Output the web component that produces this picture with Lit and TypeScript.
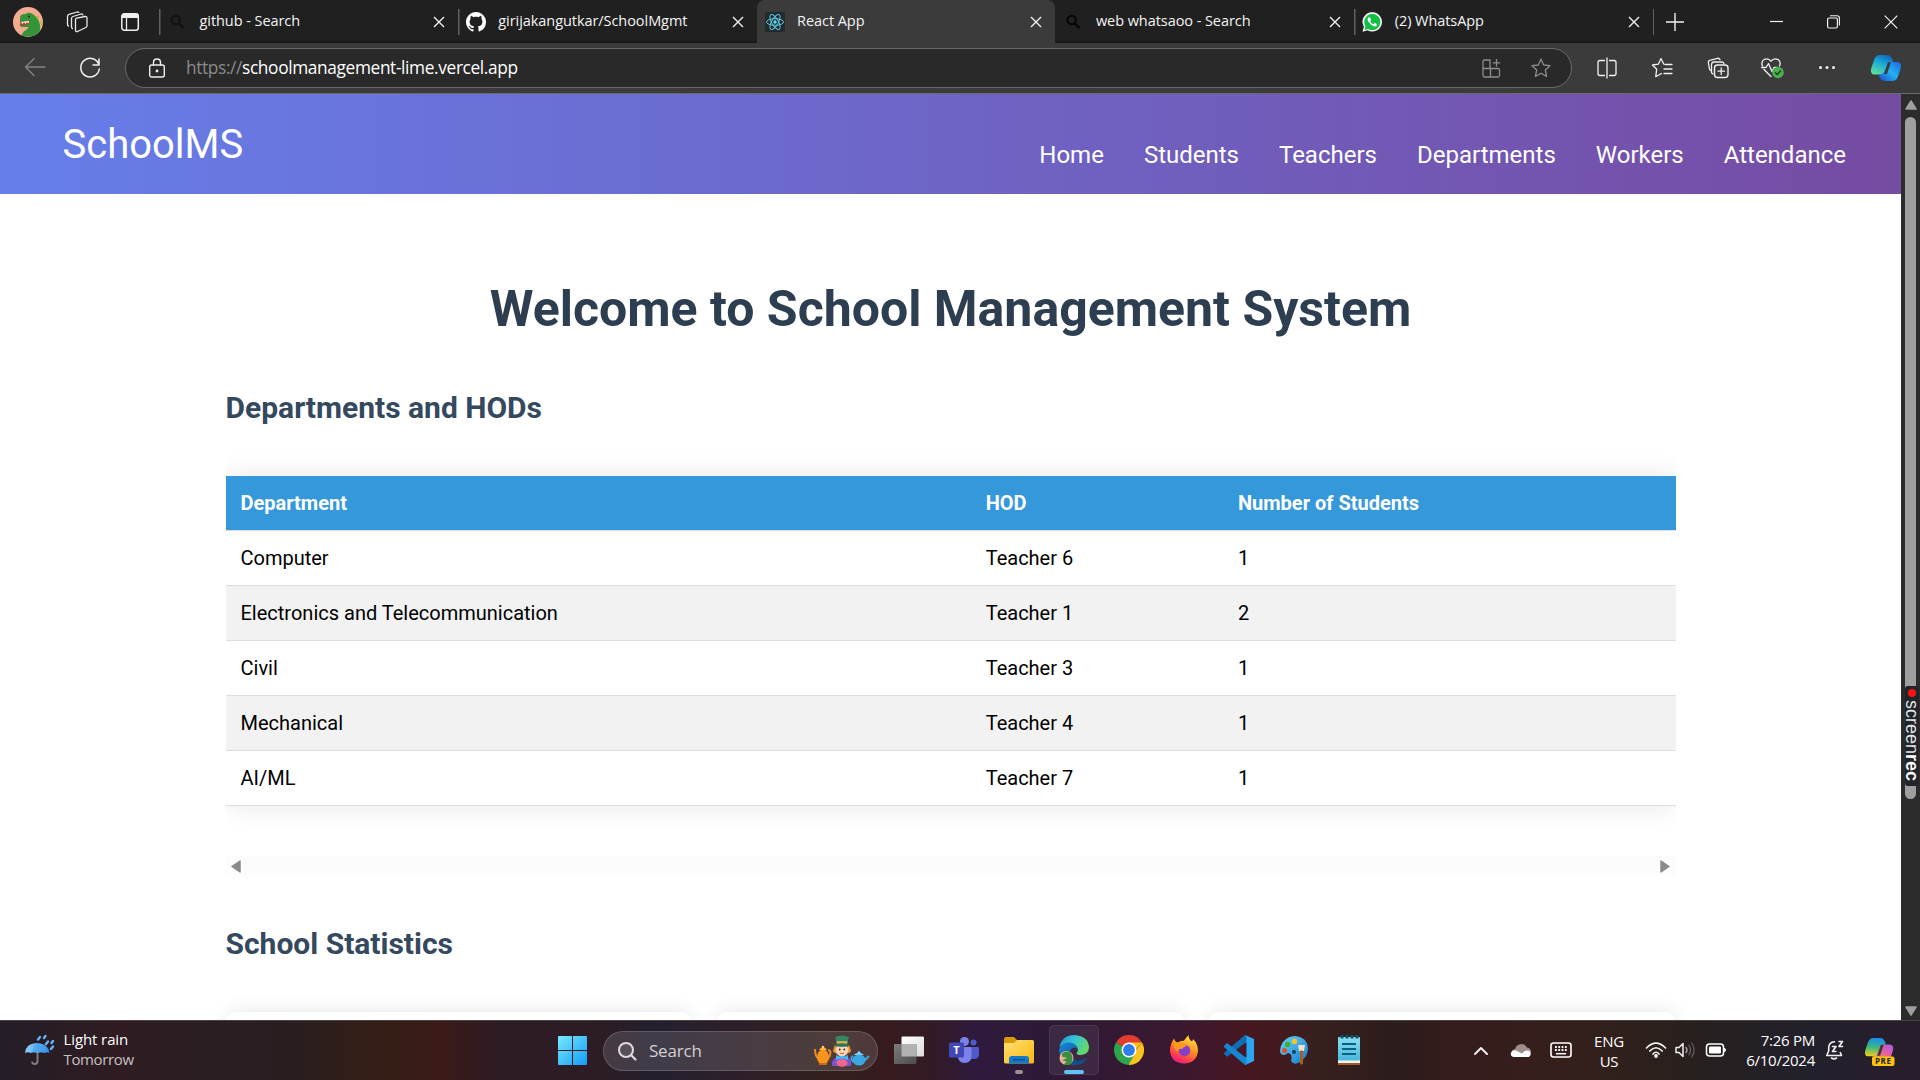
import { LitElement, html, css, svg, TemplateResult, SVGTemplateResult } from "lit";
import { customElement } from "lit/decorators.js";

const icon = (w: number, h: number, body: SVGTemplateResult, cls = "") =>
  html`<svg class=${"ic " + cls} width=${w} height=${h} viewBox=${`0 0 ${w} ${h}`}>${body}</svg>`;

/* ---------- tab strip ---------- */
const avatar = icon(30, 30, svg`
  <defs><clipPath id="av"><circle cx="15" cy="15" r="15"/></clipPath></defs>
  <g clip-path="url(#av)"><rect width="30" height="30" fill="#f4ab90"/>
  <path d="M7 11 Q7 7 12 7 Q17 4 21 8 Q26 12 27 18 Q28 25 24 29 L8 30 Q9 25 13 23 L16 20 L9 20 Q6 19 7 17 L16 16 L7 15 Z" fill="#35943a"/>
  <path d="M7 15 L17 14 L16 17 L8 19 Z" fill="#c33a2b"/>
  <path d="M8 15 L9.5 17 L11 15 L12.500 17 L14 15 L15.500 16.500 L16 14Z" fill="#fff"/>
  <circle cx="16" cy="9.500" r="1" fill="#17351a"/>
  <path d="M23 9 l3 0 -1 3z M26 15 l3 -1 -1 4z M27 21 l2.500 0 -2 3z" fill="#a6c52e"/></g>`);
const workspaces = icon(22, 22, svg`<g fill="none" stroke="#e8e8e8" stroke-width="1.300" stroke-linejoin="round">
  <path d="M9.500 8.500 Q9.500 7.500 10.700 7.200 L19 5.500 Q21 5.300 21 7 V14.500 Q21 16 19.800 16.500 L11.500 20.500 Q9.500 21 9.500 19.300 Z"/>
  <path d="M7 17.500 Q5.500 17.500 5.500 16 V7.500 Q5.500 6 7 5.500 L15 3 Q16.800 2.600 17 4.500"/>
  <path d="M3 15 Q1.500 15 1.500 13.300 V5.500 Q1.500 3.800 3 3.300 L11 1 Q12.800 .8 13 2"/></g>`);
const tabActions = icon(20, 20, svg`<rect x="1.800" y="1.800" width="16.500" height="16.500" rx="2.500" fill="none" stroke="#f0f0f0" stroke-width="1.500"/>
  <path d="M1.500 6 V4 Q1.500 1.500 4 1.500 H16 Q18.500 1.500 18.500 4 V6Z" fill="#f0f0f0"/><path d="M6.500 6 V18" stroke="#f0f0f0" stroke-width="1.300"/>`);
const searchFav = (c: string) => icon(20, 20, svg`<circle cx="8.700" cy="8" r="4.200" fill="none" stroke=${c} stroke-width="2"/><path d="M11.800 11.300 L16.500 16" stroke=${c} stroke-width="2.400"/>`);
const github = svg`<path transform="scale(1.25)" fill="#fff" d="M8 0C3.580 0 0 3.580 0 8c0 3.540 2.290 6.530 5.470 7.590.4.070.55-.17.55-.38 0-.19-.01-.82-.01-1.490-2.010.37-2.530-.49-2.690-.94-.09-.23-.48-.94-.82-1.130-.28-.15-.68-.52-.01-.53.63-.01 1.080.58 1.230.82.72 1.210 1.870.87 2.330.66.07-.52.28-.87.51-1.070-1.780-.2-3.640-.89-3.640-3.950 0-.87.31-1.590.82-2.150-.08-.2-.36-1.020.08-2.120 0 0 .67-.21 2.200.82.64-.18 1.320-.27 2-.27s1.360.09 2 .27c1.530-1.040 2.200-.82 2.200-.82.44 1.100.16 1.920.08 2.120.51.56.82 1.270.82 2.150 0 3.070-1.870 3.750-3.650 3.950.29.25.54.73.54 1.480 0 1.070-.01 1.930-.01 2.200 0 .21.15.46.55.38A8.010 8.010 0 0 0 16 8c0-4.420-3.580-8-8-8z"/>`;
const react = svg`<rect width="20" height="20" rx="2" fill="#222a2e"/><g fill="none" stroke="#5bc8e2" stroke-width="1">
  <ellipse cx="10" cy="10" rx="8.500" ry="3.300"/><ellipse cx="10" cy="10" rx="8.500" ry="3.300" transform="rotate(60 10 10)"/><ellipse cx="10" cy="10" rx="8.500" ry="3.300" transform="rotate(120 10 10)"/></g><circle cx="10" cy="10" r="1.700" fill="#61dafb"/>`;
const whatsapp = svg`<path d="M.5 19.700 L1.900 14.800 A9.700 9.700 0 1 1 5.500 18.300 Z" fill="#fff"/><path d="M2.400 17.900 L3.400 14.300 A8.100 8.100 0 1 1 6 16.900 Z" fill="#12c143"/>
  <path d="M7.300 5.300 Q6.600 5.200 6 6 Q4.900 7.400 6.300 9.600 Q8.900 13.700 12.200 14.500 Q14.400 14.800 14.900 13.200 Q15.200 12.200 14.800 12 L12.900 11.100 Q12.500 11 12.200 11.400 L11.500 12.200 Q9.300 11.500 8.200 9.200 L8.900 8.200 Q9 7.900 8.900 7.600 L8.100 5.700 Q7.900 5.300 7.300 5.300Z" fill="#fff"/>`;
const closeIcon = icon(12, 12, svg`<path d="M1 1 L11 11 M11 1 L1 11" stroke="#f2f2f2" stroke-width="1.400"/>`);
const line = (d: string, w = 1.3, c = "#f0f0f0") => svg`<path d=${d} fill="none" stroke=${c} stroke-width=${w} stroke-linecap="round" stroke-linejoin="round"/>`;

interface Tab { title: string; fav: TemplateResult; active?: boolean; }
const TABS: Tab[] = [
  { title: "github - Search", fav: searchFav("#111") },
  { title: "girijakangutkar/SchoolMgmt", fav: icon(20, 20, github) },
  { title: "React App", fav: icon(20, 20, react), active: true },
  { title: "web whatsaoo - Search", fav: searchFav("#050505") },
  { title: "(2) WhatsApp", fav: icon(20, 20, whatsapp) },
];

const STAR = "M10 1.200 L12.700 7 L19 7.700 L14.300 12 L15.600 18.500 L10 15.200 L4.400 18.500 L5.700 12 L1 7.700 L7.300 7 Z";
const toolIcons: TemplateResult[] = [
  icon(22, 22, svg`${line("M8.500 3.500 H4 Q2 3.500 2 5.500 V16.500 Q2 18.500 4 18.500 H8.500 M13.500 3.500 H18 Q20 3.500 20 5.500 V16.500 Q20 18.500 18 18.500 H13.500 M11 1 V21")}`),
  icon(22, 22, svg`${line("M14.200 7.500 L12.700 7 L10 1.500 L7.300 7.200 L1.500 8 L5.700 12.300 L4.700 19.700 L10.500 16.500 M14.500 7.500 H21 M13 12 H21 M13 16.500 H21")}`),
  icon(22, 22, svg`${line("M4 13.500 Q2.800 13.300 2.500 12 L1.300 5.500 Q1 3.800 2.800 3.300 L10.500 1.300 Q12.300 1 13 2.800")}${line("M6 17 Q4.500 16.500 4.500 15 V7.500 Q4.500 5.500 6.500 5 H14.500 Q16.500 5 17 6.500")}<rect x="7.500" y="8" width="13.500" height="12.500" rx="3" fill="#3b3b3b" stroke="#f0f0f0" stroke-width="1.400"/>${line("M14.200 11 V17.500 M11 14.200 H17.500")}`),
  icon(24, 22, svg`${line("M2.500 9 Q.5 4.500 4.500 2.300 Q8.500 .8 11 4.200 Q13.500 .8 17.500 2.300 Q21.500 4.500 19.500 9 M4 12.500 L11 19.500")}${line("M1.500 10.500 H6 L8.500 6.500 L12 14.500 L14 10.500 H17")}<circle cx="18" cy="15.500" r="5.800" fill="#4caf50"/>${line("M15.600 15.700 L17.300 17.400 L20.500 14", 1.4, "#1d3b1e")}`),
  icon(22, 22, svg`<g fill="#f0f0f0"><circle cx="4.500" cy="10.500" r="1.500"/><circle cx="11" cy="10.500" r="1.500"/><circle cx="17.500" cy="10.500" r="1.500"/></g>`),
];

const copilotShape = (a: string, b: string) => svg`
  <path d="M9 0 H16 Q20 0 21.500 4.500 L22 7 Q18 7 16.500 12 L14.500 18 Q13.500 19.500 11 19.500 H4 Q-1.500 19.500 .5 12.500 L3 5 Q4.700 0 9 0Z" fill=${`url(#${a})`}/>
  <path d="M21.500 7 H26 Q31.500 7 29.500 14 L27 21.500 Q25.300 26 21 26 H14 Q10 26 8.500 22 L8 19.500 Q12 20 13.700 14.500 L15.700 9 Q16.500 7 19 7Z" fill=${`url(#${b})`}/>
  <path d="M16.800 7.200 L13 19 H16 L20 7.200Z" fill="#3a3a3e"/>`;
const copilot = icon(30, 26, svg`<defs>
  <linearGradient id="c1" x1=".7" y1="0" x2=".2" y2="1"><stop offset="0" stop-color="#1268b8"/><stop offset=".4" stop-color="#16a6dc"/><stop offset="1" stop-color="#5fe29a"/></linearGradient>
  <linearGradient id="c2" x1="0" y1="1" x2="1" y2="0"><stop offset="0" stop-color="#1b49cf"/><stop offset=".5" stop-color="#22b3f3"/><stop offset="1" stop-color="#1e62e0"/></linearGradient></defs>${copilotShape("c1", "c2")}`);

/* ---------- taskbar ---------- */
const umbrella = icon(32, 32, svg`<defs><linearGradient id="um" x1="0" x2="1"><stop offset="0" stop-color="#8fd0ff"/><stop offset="1" stop-color="#2f8be0"/></linearGradient></defs>
  <path d="M13.500 18 V27 Q13.500 30 10.700 30 Q8 30 8.200 27.500" fill="none" stroke="#85807f" stroke-width="1.900"/>
  <path d="M1 19 Q2 9 13 9 Q24 9 25.500 19 Q23 17.500 20.500 19 Q17 17.500 13.500 19 Q10 17.500 6.500 19 Q4 17.500 1 19Z" fill="url(#um)"/><path d="M8 18.500 Q9 12 13 9 Q17.500 12 18.500 18.500 Q16 17.800 13.500 19 Q10 17.800 8 18.500" fill="#3d9cee" opacity=".45"/>
  <path d="M14 5.500 L16 3 M20 4 L21.500 2 M22 10 L24 7.500 M27.500 9 L29 7 M27 15 L29 12.500" stroke="#64b5f6" stroke-width="2.400" stroke-linecap="round"/>`);
const winLogo = icon(29, 29, svg`<defs><linearGradient id="wn" gradientUnits="userSpaceOnUse" x1="0" y1="0" x2="29" y2="29"><stop offset="0" stop-color="#77eaff"/><stop offset="1" stop-color="#139bf7"/></linearGradient></defs>
  <path d="M0 1 Q0 0 1 0 H14 V14 H0Z M15 0 H28 Q29 0 29 1 V14 H15Z M0 15 H14 V29 H1 Q0 29 0 28Z M15 15 H29 V28 Q29 29 28 29 H15Z" fill="url(#wn)"/>`);
const hatter = icon(56, 32, svg`
  <path d="M1 14 Q1 22 5 24 M14 15 Q19 16 14 24" stroke="#f08a1c" stroke-width="2" fill="none"/><ellipse cx="9" cy="22" rx="6" ry="7.500" fill="#f7941d"/><path d="M5 15 Q9 9 13 15Z" fill="#ffb43b"/><rect x="5" y="28" width="8" height="2" fill="#c96a12"/><circle cx="9" cy="12" r="1.200" fill="#ffd26a"/>
  <path d="M18 31 Q17 22 28 21 Q39 22 37 31Z" fill="#7a55d2"/><path d="M25 21 L28 25 L31 21Z" fill="#3fb4f0"/>
  <path d="M21.500 11 L20 16 L23 18 M34.500 11 L36 16 L33 18" fill="#f1a63b" stroke="#e8962f" stroke-width="2"/>
  <circle cx="28" cy="15" r="6.300" fill="#f8d5b5"/><circle cx="25.700" cy="14.500" r=".9" fill="#3c2b1f"/><circle cx="30.300" cy="14.500" r=".9" fill="#3c2b1f"/><path d="M26 18 Q28 19.500 30 18" stroke="#c25b4c" fill="none"/>
  <path d="M21 2 Q28 -1 35 2 L33 9 H23Z" fill="#348561"/><path d="M22.500 6.300 H33.500 L33 9 H23Z" fill="#e0b64d"/><ellipse cx="28" cy="10" rx="7.700" ry="1.800" fill="#2c7354"/>
  <ellipse cx="28" cy="28" rx="5.500" ry="3.800" fill="#f0668c"/><path d="M22 20 L28 23 L22 25Z M34 20 L28 23 L34 25Z" fill="#45b9f5"/>
  <ellipse cx="45" cy="25" rx="6.500" ry="5.500" fill="#3aa6e2"/><path d="M39.500 20 Q45 15 50 20Z" fill="#74cdf4"/><path d="M50 26 L55 21 M39 21 Q35.500 23 39.500 27" stroke="#3aa6e2" stroke-width="2" fill="none"/><circle cx="45" cy="17.500" r="1.200" fill="#8fdcff"/>`);
const taskView = icon(30, 30, svg`<defs><linearGradient id="tv" x1="0" y1="0" x2="1" y2="1"><stop offset="0" stop-color="#fff"/><stop offset="1" stop-color="#dcdcdc"/></linearGradient><linearGradient id="tw" x1="0" y1="0" x2="1" y2="1"><stop offset="0" stop-color="#7d7d7d"/><stop offset="1" stop-color="#4b4b4b"/></linearGradient></defs>
  <rect x="7.500" y="1.500" width="22.500" height="20" rx="1" fill="url(#tv)"/><rect x="0" y="9" width="22.500" height="20" rx="1" fill="url(#tw)"/><rect x="7.500" y="9" width="15" height="12.500" fill="#b2b2b2"/>`);
const teams = icon(30, 30, svg`<circle cx="24.500" cy="7.500" r="3" fill="#5059c9"/><path d="M19 12 H29 Q30 12 30 13.500 V19 Q30 24 25 24 H20Z" fill="#5059c9"/><circle cx="15.500" cy="6.500" r="4.500" fill="#7b83eb"/>
  <path d="M9 12 H21 Q22.500 12 22.500 13.500 V21 Q22.500 28 15.500 28 Q9 28 9 21Z" fill="#7b83eb"/><rect x="0" y="7.500" width="15" height="15" rx="1.500" fill="#4048b8"/><text x="7.500" y="19" class="tm" text-anchor="middle">T</text>`);
const explorer = icon(30, 30, svg`<defs><linearGradient id="fo" x1="0" y1="0" x2="1" y2="1"><stop offset="0" stop-color="#ffe070"/><stop offset="1" stop-color="#fbb712"/></linearGradient></defs>
  <path d="M0 4 Q0 2 2 2 H10 L13 5 H20 V12 H0Z" fill="#d99a0b"/><path d="M0 8 H10 L13 5 H28.500 Q30 5 30 6.500 V27 Q30 28.500 28.500 28.500 H1.500 Q0 28.500 0 27Z" fill="url(#fo)"/>
  <path d="M5 28.500 V24 Q5 21 8 21 H22 Q25 21 25 24 V28.500Z" fill="#1379c9"/><path d="M9 24.700 H21" stroke="#0a4a86" stroke-width="1.300"/>`);
const edge = icon(30, 30, svg`<defs><linearGradient id="e1" x1="0" y1="0" x2="1" y2=".4"><stop offset="0" stop-color="#1f8ed0"/><stop offset=".5" stop-color="#35c3d8"/><stop offset="1" stop-color="#62d96b"/></linearGradient>
  <linearGradient id="e2" x1="0" y1="0" x2="1" y2="1"><stop offset="0" stop-color="#1a86d8"/><stop offset="1" stop-color="#0c4b93"/></linearGradient></defs>
  <path d="M.4 12 Q3 0 15.500 0 Q29.500 1 30 12.500 Q29.500 19.500 22 20 Q17.500 20 17.500 18 Q20 15.500 18 12 Q14 7 7 9 Q3 10 .4 12Z" fill="url(#e1)"/>
  <path d="M.2 14 Q3 7 11 7.500 Q18 8.500 18.700 14 Q14 11 11.500 15 Q9 20 14 25 Q20 30 28 23 Q23 30 15 30 Q0 28 .2 14Z" fill="url(#e2)"/>
  <path d="M11.500 15 Q9 23 18 25.500 Q23 26.500 28 22.500 Q26 29 17 30 Q7 28 8 19 Q9 16 11.500 15" fill="#114f93"/>
  <circle cx="7.500" cy="23" r="7" fill="#efb294"/><path d="M3 18.500 Q9 14.500 12.500 19 Q15 25 11 30 H4.500 L7.500 26.500 L3 25.500 L8 23 L3 21.500Z" fill="#3b8e3d"/>`);
const chrome = icon(30, 30, svg`<path d="M15 15 L2 7.500 A15 15 0 0 1 28 7.500Z" fill="#e33b2e"/><path d="M15 15 H22 L28 7.500 A15 15 0 0 1 15 30Z" fill="#fcc31e"/><path d="M15 15 L20.500 19.500 L14.500 30 A15 15 0 0 1 2 7.500Z" fill="#2da44e"/><path d="M15 7.500 H28 L21.500 15Z" fill="#fcc31e"/><circle cx="15" cy="15" r="7.500" fill="#fff"/><circle cx="15" cy="15" r="5.900" fill="#2f7ded"/>`);
const firefox = icon(30, 30, svg`<defs><linearGradient id="ff" x1=".8" y1="0" x2=".3" y2="1"><stop offset="0" stop-color="#ffec4a"/><stop offset=".45" stop-color="#ff9420"/><stop offset=".8" stop-color="#ff3a50"/><stop offset="1" stop-color="#e01c8a"/></linearGradient></defs>
  <path d="M5 3.500 Q6 7 9 7.500 Q12 5 14.500 6 Q17 3 19.500 0 Q19.500 4 23 6.500 Q24 5 24 4 Q29 9 29 15.500 Q28 28 15 28.500 Q2 28 1 16 Q1 9 5 3.500Z" fill="url(#ff)"/>
  <circle cx="15.500" cy="15.500" r="5.800" fill="#8440c9"/><path d="M5 9 Q10 6 15 9.500 L18 11 Q14 12 13 14 Q9 13 9.500 17 Q4 14 5 9Z" fill="#ff9a1f"/>`);
const vscode = icon(30, 30, svg`<path d="M21 0 L30 4 V26 L21 30 Z" fill="#2aa7f2"/><path d="M0 19 L3 21.800 L22.500 7 V0 H21 L.5 17.500Z" fill="#0f6fb5"/><path d="M0 11 L3 8 L22.500 23 V30 H21 L.5 12.500Z" fill="#1787d3"/><path d="M22.500 7.300 L12.500 15 L22.500 22.700Z" fill="#431a28"/>`);
const paint = icon(30, 30, svg`<defs><linearGradient id="pa" x1="0" y1="0" x2="1" y2="1"><stop offset="0" stop-color="#66d4f2"/><stop offset="1" stop-color="#1779cf"/></linearGradient></defs>
  <path d="M16 1 Q28 2 29 13 Q29 22 21 27 Q15 31 12 26 Q14 19 9 18 Q4 22 1.500 18 Q0 13 4 7 Q9 1 16 1Z" fill="url(#pa)"/><circle cx="8.500" cy="9.500" r="2.700" fill="#3fae2a"/><circle cx="15.500" cy="6.500" r="2.700" fill="#f9c41d"/><circle cx="5.500" cy="15.500" r="2.500" fill="#d9502b"/><circle cx="15" cy="17" r="2" fill="#10406f"/>
  <path d="M19 10 H26 L25 16 H20Z" fill="#f6dfc6"/><rect x="21" y="15.500" width="3" height="14" rx="1" fill="#a4601c"/>`);
const notepad = icon(30, 30, svg`<defs><linearGradient id="np" x1="0" y1="0" x2="0" y2="1"><stop offset="0" stop-color="#8be0f2"/><stop offset="1" stop-color="#46b8dc"/></linearGradient></defs>
  <rect x="4" y="26" width="22" height="4" fill="#a35a22"/><rect x="4" y="23" width="22" height="5" fill="#f3f3f3"/><rect x="4" y="2" width="22" height="23.500" rx="1" fill="url(#np)"/><path d="M8 9 H22 M8 14 H22 M8 19 H22" stroke="#0b5f80" stroke-width="1.800"/><path d="M8 0 V3.500 M13 0 V3.500 M18 0 V3.500 M23 0 V3.500" stroke="#0d5470" stroke-width="3"/>`);
const copilotPre = icon(30, 30, svg`<defs><linearGradient id="p1" x1=".3" y1="0" x2=".2" y2="1"><stop offset="0" stop-color="#1a8df0"/><stop offset=".5" stop-color="#3cb97b"/><stop offset="1" stop-color="#f4cf1c"/></linearGradient>
  <linearGradient id="p2" x1="1" y1="0" x2=".3" y2="1"><stop offset="0" stop-color="#a35bf0"/><stop offset=".5" stop-color="#ec5f9c"/><stop offset="1" stop-color="#f99a3c"/></linearGradient></defs>
  <g transform="translate(0 2) scale(.94)">${copilotShape("p1", "p2")}</g><rect x="7" y="20.500" width="22.500" height="9.500" rx="2" fill="#ffc40c"/><text x="18.300" y="28" class="pre" text-anchor="middle">PRE</text>`);

const APPS: { ic: TemplateResult; dot?: boolean; active?: boolean }[] = [
  { ic: taskView }, { ic: teams }, { ic: explorer, dot: true }, { ic: edge, active: true },
  { ic: chrome }, { ic: firefox }, { ic: vscode }, { ic: paint }, { ic: notepad },
];

const ROWS: [string, string, number][] = [
  ["Computer", "Teacher 6", 1],
  ["Electronics and Telecommunication", "Teacher 1", 2],
  ["Civil", "Teacher 3", 1],
  ["Mechanical", "Teacher 4", 1],
  ["AI/ML", "Teacher 7", 1],
];

@customElement("app-root")
export class AppRoot extends LitElement {
  static styles = css`
    :host { display: block; width: 1920px; height: 1080px; overflow: hidden; background: #fff; }
    * { box-sizing: border-box; }
    .screen { display: flex; flex-direction: column; width: 1920px; height: 1080px; font-family: "Open Sans", "Noto Sans", sans-serif; }
    .ic { display: block; flex: none; }
    .grow { flex: 1; }

    .tabs { height: 43px; flex: none; display: flex; align-items: center; background: #202020; box-shadow: inset 0 -2px 2px -1px #151515; color: #f4f4f4; }
    .lead { width: 159px; display: flex; align-items: center; padding-left: 13px; gap: 23px; flex: none; }
    .lead .ic:last-child { margin-left: 9px; }
    .tab { width: 298.800px; height: 43px; flex: none; display: flex; align-items: center; padding: 1px 13px 0 7px; font-size: 14.500px; gap: 12.500px; border-left: 1px solid transparent;
      background: linear-gradient(#606060, #606060) left 9px / 1.500px 26px no-repeat; background-origin: border-box; white-space: nowrap; letter-spacing: -.06px; }
    .tab .t { flex: 1; height: 22px; line-height: 20px; }
    .tab.active { background: #3b3b3b; border-radius: 8px 8px 0 0; }
    .tab.after { background: none; }
    .endsep { width: 1.500px; height: 26px; background: #606060; margin-right: 12px; }
    .win { display: flex; align-items: center; gap: 44px; padding-right: 22px; }

    .toolbar { height: 51px; flex: none; background: #3b3b3b; border-bottom: 1px solid #6a6a6a; display: flex; align-items: center; padding: 0 19px 0 24px; }
    .reload { margin-left: 33px; }
    .omni { width: 1447px; height: 40px; margin: 0 24px 0 24px; border: 1px solid #6a6a6a; border-radius: 20px; background: #292929; display: flex; align-items: center; padding: 0 20px 0 22px; flex: none; }
    .url { margin-left: 20px; font-size: 17.300px; line-height: 24px; color: #fff; letter-spacing: -.36px; white-space: nowrap; }
    .url .dim { color: #8b8b8b; }
    .omni .star { margin-left: 30px; }
    .tools { display: flex; align-items: center; gap: 33.300px; flex: 1; }
    .tools .ic:nth-of-type(4) { margin: 0 -1.500px; }

    .view { flex: none; height: 926px; display: flex; background: #fff; }
    .page { width: 1901px; height: 926px; overflow: hidden; font-family: Roboto, sans-serif; display: flex; flex-direction: column; }
    .head { height: 100px; flex: none; display: flex; align-items: center; justify-content: space-between; padding: 0 55px 0 62.500px; color: #fff; background: linear-gradient(90deg, #667eea, #764ba2); }
    .brand { font-size: 40px; line-height: 48px; padding-top: 2px; }
    nav { display: flex; gap: 40px; font-size: 24px; line-height: 30px; padding-top: 21px; }
    main { width: 1450px; margin: 85px 0 0 225.500px; flex: none; }
    h1 { margin: 0; font-size: 50px; line-height: 60px; text-align: center; color: #2c3e50; font-weight: 700; }
    h2 { margin: 51px 0 0; font-size: 30px; line-height: 36px; color: #34495e; font-weight: 700; }
    .wrap { margin-top: 10px; padding: 40px 0 50px; overflow: hidden; }
    .grid { box-shadow: 0 0 25px rgba(0, 0, 0, .1); background: #fff; }
    .row { display: grid; grid-template-columns: 745.200px 252.300px 1fr; height: 55px; border-bottom: 1px solid #ddd; font-size: 20px; line-height: 54px; color: #000; }
    .row span { padding-left: 15px; }
    .row.even { background: #f2f2f2; }
    .row.th { background: #3498db; background-clip: padding-box; color: #fff; font-weight: 700; }
    .hbar { height: 19px; background: #fcfcfc; display: flex; align-items: center; justify-content: space-between; padding: 1px 5.500px 0; }
    .cards { display: grid; grid-template-columns: repeat(3, 1fr); gap: 25px; margin-top: 50px; }
    .card { height: 150px; border-radius: 10px; background: #fff; box-shadow: 0 0 20px rgba(0, 0, 0, .1); }
    .vbar { width: 19px; background: #2c2c2c; display: flex; flex-direction: column; padding: 6px 0 4px 4px; position: relative; }
    .thumb { width: 11px; height: 682px; margin-top: 7px; border-radius: 6px; background: #9f9f9f; }
    .rec { position: absolute; left: 4px; top: 592px; width: 14px; height: 100px; border-radius: 3px; background: #20252b; writing-mode: vertical-rl; display: flex; align-items: center; padding-top: 3px; font: 18px/14px "Liberation Sans", sans-serif; color: #e4e4e4; white-space: nowrap; }
    .rec i { width: 8px; height: 8px; border-radius: 50%; background: #f11; margin-bottom: 3px; flex: none; }
    .rec b { color: #fff; }

    .bar { height: 60px; flex: none; border-top: 1px solid #4a4444; display: flex; align-items: center; color: #fff;
      background: linear-gradient(90deg, #241e28 0, #2f1c22 110px, #2b1e22 200px, #281e20 290px, #351e16 380px, #3a1a17 440px, #2d1c26 500px, #2d1c24 590px, #24202e 655px, #2d1f2a 740px, #33201d 830px, #361a1f 890px, #331a24 930px, #2f1a3d 975px, #2d1935 1060px, #3b1830 1180px, #481720 1250px, #36201e 1320px, #2c1c1c 1400px, #361b1c 1450px, #34201a 1580px, #27201f 1700px, #22202b 1810px, #291d2c 1920px); }
    .weather { width: 533px; padding-left: 24px; display: flex; gap: 7.500px; align-items: center; font-size: 15px; line-height: 20px; padding-bottom: 3px; letter-spacing: -.35px; }
    .weather .main { letter-spacing: -.1px; }
    .weather .sub { color: #c6c1c2; }
    .weather .ic { margin-top: 2px; }
    .start { width: 70px; padding-left: 25px; }
    .search { width: 275px; height: 40px; border-radius: 20px; border: 1px solid rgba(255, 255, 255, .16); background: rgba(255, 255, 255, .13); display: flex; align-items: center; padding: 0 7px 0 13px; font-size: 17px; color: #d3cfd3; gap: 12px; letter-spacing: -.2px; }
    .search .lbl { flex: 1; line-height: 38px; }
    .apps { display: flex; gap: 5px; margin-left: 6px; margin-top: -1px; }
    .slot { width: 50px; height: 50px; border-radius: 5px; display: flex; flex-direction: column; align-items: center; padding-top: 9px; border: 1px solid transparent; }
    .slot.on { background: rgba(255, 255, 255, .07); border-color: rgba(255, 255, 255, .07); }
    .mark { width: 8px; height: 4px; border-radius: 2px; background: #9a9197; margin-top: 5px; flex: none; }
    .on .mark { width: 20px; background: #5ec5fb; }
    .tray { display: flex; align-items: center; margin-left: 99px; margin-top: -2px; font-size: 15px; line-height: 20px; white-space: nowrap; letter-spacing: -.25px; }
    .lang { width: 40px; text-align: center; margin: 2px 16px 0 17px; }
    .when { width: 88px; text-align: right; }
    .cop { margin-right: 25px; }
    .tm { font: 700 11px "Open Sans", sans-serif; fill: #fff; }
    .pre { font: 700 8px "Open Sans", sans-serif; fill: #222; letter-spacing: .6px; }
  `;

  private tab(t: Tab, i: number) {
    const after = i > 0 && TABS[i - 1].active;
    return html`<div class="tab ${t.active ? "active" : ""} ${after ? "after" : ""}">${t.fav}<span class="t">${t.title}</span>${closeIcon}</div>`;
  }

  render() {
    return html`<div class="screen">
      <div class="tabs">
        <div class="lead">${avatar}${workspaces}${tabActions}</div>
        ${TABS.map((t, i) => this.tab(t, i))}
        <div class="endsep"></div>
        ${icon(18, 18, svg`<path d="M9 0 V18 M0 9 H18" stroke="#f2f2f2" stroke-width="1.400"/>`)}
        <div class="grow"></div>
        <div class="win">
          ${icon(13, 13, svg`<path d="M0 6.500 H13" stroke="#f2f2f2" stroke-width="1.200"/>`)}
          ${icon(13, 14, svg`<rect x=".6" y="3" width="9.800" height="10" rx="1.500" fill="none" stroke="#f2f2f2" stroke-width="1.200"/><path d="M3 .7 H10 Q12.400 .7 12.400 3 V10.500" fill="none" stroke="#f2f2f2" stroke-width="1.100"/>`)}
          ${icon(14, 14, svg`<path d="M.7 .7 L13.300 13.300 M13.300 .7 L.7 13.300" stroke="#f2f2f2" stroke-width="1.200"/>`)}
        </div>
      </div>
      <div class="toolbar">
        ${icon(22, 20, svg`${line("M21 9 H1.500 M10 .7 L1.500 9 L10 17.500", 1.3, "#858585")}`)}
        ${icon(22, 22, svg`${line("M20 8 A9.300 9.300 0 1 0 20.300 12 M20 2 V8 H14", 1.500)}`, "reload")}
        <div class="omni">
          ${icon(18, 20, svg`<rect x="1.700" y="7" width="14.600" height="12" rx="2" fill="none" stroke="#eee" stroke-width="1.400"/><circle cx="9" cy="13" r="1.400" fill="#eee"/>${line("M5.500 7 V4.500 Q5.500 1 9 1 Q12.500 1 12.500 4.500 V7", 1.4)}`)}
          <span class="url"><span class="dim">https://</span>schoolmanagement-lime.vercel.app</span>
          <span class="grow"></span>
          ${icon(20, 20, svg`${line("M9 10.500 V2 H3.500 Q2 2 2 3.500 V17.500 Q2 19 3.500 19 H17 Q18.500 19 18.500 17.500 V12 Q18.500 10.500 17 10.500 H2 M9.500 10.500 V19 M15.500 1.500 V8 M12.300 4.800 H18.800", 1.3, "#8d8d8d")}`)}
          ${icon(20, 20, svg`${line(STAR, 1.3, "#8d8d8d")}`, "star")}
        </div>
        <div class="tools">${toolIcons}</div>
        ${copilot}
      </div>
      <div class="view">
        <div class="page">
          <header class="head"><span class="brand">SchoolMS</span>
            <nav>${["Home", "Students", "Teachers", "Departments", "Workers", "Attendance"].map((n) => html`<span>${n}</span>`)}</nav>
          </header>
          <main>
            <h1>Welcome to School Management System</h1>
            <h2>Departments and HODs</h2>
            <div class="wrap"><div class="grid">
              <div class="row th"><span>Department</span><span>HOD</span><span>Number of Students</span></div>
              ${ROWS.map((r, i) => html`<div class="row ${i % 2 ? "even" : ""}">${r.map((c) => html`<span>${c}</span>`)}</div>`)}
            </div></div>
            <div class="hbar">
              ${icon(10, 13, svg`<path d="M9 1 V12 L1 6.500Z" fill="#8b8b8b" stroke="#8b8b8b" stroke-width="1.500" stroke-linejoin="round"/>`)}
              ${icon(10, 13, svg`<path d="M1 1 V12 L9 6.500Z" fill="#8b8b8b" stroke="#8b8b8b" stroke-width="1.500" stroke-linejoin="round"/>`)}
            </div>
            <h2>School Statistics</h2>
            <div class="cards"><div class="card"></div><div class="card"></div><div class="card"></div></div>
          </main>
        </div>
        <div class="vbar">
          ${icon(12, 10, svg`<path d="M6 1 L11 9 H1Z" fill="#9f9f9f" stroke="#9f9f9f" stroke-width="1.500" stroke-linejoin="round"/>`)}
          <div class="thumb"></div><div class="grow"></div>
          ${icon(12, 10, svg`<path d="M6 9 L11 1 H1Z" fill="#9f9f9f" stroke="#9f9f9f" stroke-width="1.500" stroke-linejoin="round"/>`)}
          <div class="rec"><i></i><span>screen<b>rec</b></span></div>
        </div>
      </div>
      <div class="bar">
        <div class="weather">${umbrella}<div><div class="main">Light rain</div><div class="sub">Tomorrow</div></div></div>
        <div class="start">${winLogo}</div>
        <div class="search">
          ${icon(20, 20, svg`<circle cx="9" cy="9" r="7" fill="rgba(255,255,255,.1)" stroke="#dedade" stroke-width="2"/><path d="M14 14 L18.500 18.500" stroke="#dedade" stroke-width="2.200" stroke-linecap="round"/>`)}
          <span class="lbl">Search</span>${hatter}
        </div>
        <div class="apps">${APPS.map((a) => html`<div class="slot ${a.active ? "on" : ""}">${a.ic}${a.dot || a.active ? html`<div class="mark"></div>` : ""}</div>`)}</div>
        <div class="tray">
          ${icon(17, 12, svg`${line("M2 10 L8 4 L14 10", 2)}`)}
          ${icon(60, 20, svg`<path d="M25 9 A6.500 6.500 0 0 1 37 7.500 Q41 8 41 12 L30 16 L22 14 Q21 10 25 9Z" fill="#9d8d8c"/><path d="M24 17 Q20 16.500 21 12.500 Q23 9 27 11 L32 13.500 Q36 9 39.500 11 Q42.500 14 39 17Z" fill="#fff"/>`)}
          ${icon(22, 18, svg`<rect x="1" y="2" width="20" height="14" rx="2.500" fill="none" stroke="#fff" stroke-width="1.600"/><path d="M5 6 H18 M5 9 H18" stroke="#fff" stroke-width="1.800" stroke-dasharray="1.800 1.500"/><path d="M6 12.700 H16" stroke="#fff" stroke-width="1.500"/>`)}
          <div class="lang">ENG<br>US</div>
          ${icon(22, 18, svg`${line("M1.500 7 Q11 -2.500 20.500 7 M4.800 10 Q11 3.500 17.200 10 M8 13 Q11 9.500 14 13", 1.7)}<circle cx="11" cy="15" r="1.900" fill="#fff"/>`)}
          ${icon(38, 18, svg`${line("M9 6.500 H12 L16 2.500 V15.500 L12 11.500 H9Z", 1.5)}${line("M19 6.500 Q21 9 19 11.500", 1.4, "#a59e9e")}${line("M22 4.300 Q25 9 22 13.700 M24.700 2 Q29.500 9 24.700 16", 1.3, "#655d5d")}`)}
          ${icon(22, 18, svg`<rect x="1.500" y="3" width="17" height="12" rx="3" fill="none" stroke="#fff" stroke-width="1.500"/><rect x="4" y="5.500" width="12" height="7" rx="1" fill="#fff"/><path d="M19.500 7 Q21.500 9 19.500 11Z" fill="#fff" stroke="#fff"/>`)}
          <div class="when">7:26 PM<br>6/10/2024</div>
          ${icon(40, 22, svg`${line("M19.500 2.700 Q13.700 3 13.700 9 V12 L11.700 16.500 H26.500 L25.300 13.500 M16.500 19 Q19 20.800 21.500 19", 1.6)}${line("M17.500 7.500 H21 L17.500 12.500 H21", 1.6)}${line("M24 2.500 H27.500 L24 7.500 H27.500", 1.6)}`)}
        </div>
        <div class="grow"></div>
        <div class="cop">${copilotPre}</div>
      </div>
    </div>`;
  }
}
